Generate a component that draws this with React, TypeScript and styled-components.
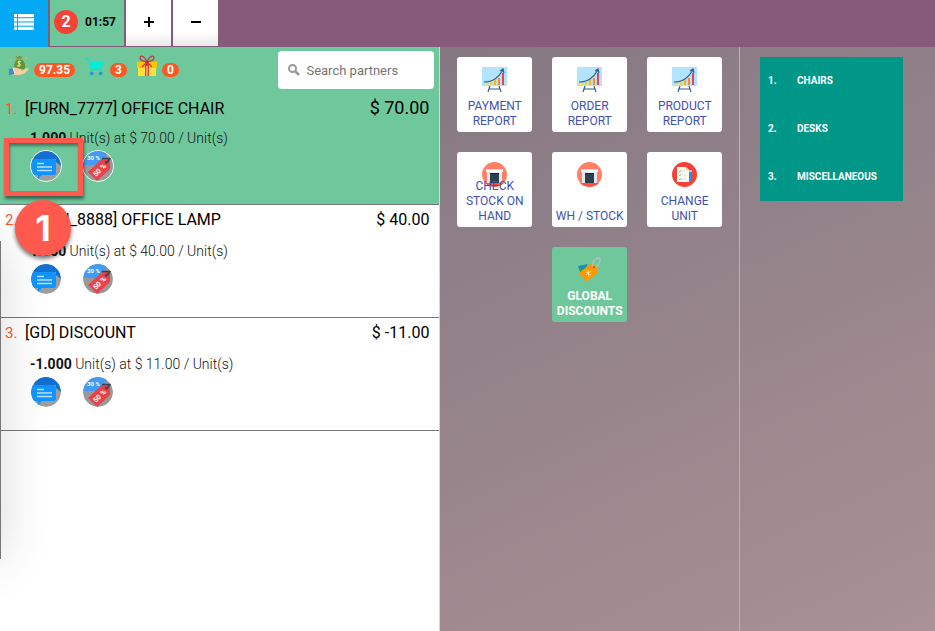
import React from "react";
import styled, { createGlobalStyle, css } from "styled-components";

const GlobalStyle = createGlobalStyle`
  * { box-sizing: border-box; }
  body { margin: 0; font-family: Roboto, "Liberation Sans", sans-serif; color: #111; overflow: hidden; }
  button, input { font: inherit; }
`;

const Screen = styled.div`
  display: flex;
  flex-direction: column;
  height: 100vh;
`;
const TopBar = styled.header`
  display: flex;
  gap: 2px;
  height: 47px;
  flex: none;
  background: #875a7b;
`;
const BarButton = styled.button<{ $kind: "menu" | "order" | "plain" }>`
  display: flex;
  align-items: center;
  justify-content: center;
  border: 0;
  padding: 0 0 2px;
  height: 46px;
  width: 45px;
  color: #000;
  background: linear-gradient(#fff 70%, #e8e8e8);
  ${(p) => p.$kind === "menu" && css`width: 48px; height: 47px; background: #03a9f4; color: #fff;`}
  ${(p) => p.$kind === "order" && css`
    width: 74px; gap: 7px; background: #6ec89b; font-size: 12px; font-weight: 700;
    padding: 0 4px 3px 0;
  `}
`;
const OrderNumber = styled.span`
  display: grid;
  place-items: center;
  width: 24px;
  height: 24px;
  border-radius: 50%;
  background: #f44336;
  color: #fff;
  font-size: 16px;
`;
const Panes = styled.div`
  display: flex;
  flex: 1;
  min-height: 0;
`;
const OrderPane = styled.section`
  position: relative;
  flex: 0 0 47%;
  background: #fff;
  border-right: 1px solid #d5d5d5;
  box-sizing: content-box;
`;
const EdgeShadow = styled.div`
  position: absolute;
  left: -40px;
  top: 194px;
  width: 41px;
  height: 318px;
  border-right: 1px solid #777;
  box-shadow: 0 0 50px rgba(0, 0, 0, 0.16);
`;
const CustomerBar = styled.div`
  position: relative;
  display: flex;
  justify-content: space-between;
  height: 45px;
  padding: 4px 5px 0 8px;
  background: #6ec89b;
`;
const Stats = styled.div`
  display: flex;
  align-items: flex-start;
  padding-top: 4px;
`;
const Stat = styled.div`
  display: flex;
  gap: 4px;
  margin-right: 9px;
`;
const StatValue = styled.span`
  margin-top: 8px;
  height: 14px;
  line-height: 14px;
  padding: 0 5px;
  border-radius: 7px;
  background: #ff5722;
  color: #fff;
  font-size: 12px;
  font-weight: 700;
`;
const Search = styled.label`
  display: flex;
  align-items: center;
  gap: 6px;
  width: 156px;
  height: 38px;
  padding: 0 10px;
  border-radius: 4px;
  background: #fff;
`;
const SearchInput = styled.input`
  width: 110px;
  min-width: 0;
  border: 0;
  padding: 1px 0 0;
  outline: 0;
  background: none;
  font-size: 13px;
  &::placeholder { color: #757575; opacity: 1; }
`;
const Lines = styled.ol`
  list-style: none;
  margin: 0;
  padding: 0;
`;
const Line = styled.li<{ $selected: boolean }>`
  position: relative;
  height: 113px;
  padding: 5px 10px 0 5px;
  border-bottom: 1px solid #777;
  ${(p) => p.$selected && css`background: #6ec89b; z-index: 1;`}
`;
const LineHead = styled.div`
  display: flex;
  align-items: baseline;
  height: 21px;
  font-size: 16px;
  color: #000;
`;
const LineNumber = styled.span`
  width: 20px;
  color: #ff5722;
  font-size: 15px;
`;
const Price = styled.span<{ $large: boolean }>`
  margin-left: auto;
  font-size: ${(p) => (p.$large ? 18 : 16)}px;
`;
const Quantity = styled.div`
  margin: 11px 0 0 25px;
  height: 18px;
  line-height: 18px;
  font-size: 14px;
  font-weight: 300;
  b { font-weight: 700; }
`;
const LineTools = styled.div`
  display: flex;
  gap: 20px;
  margin: 3px 0 0 25px;
`;
const RoundButton = styled.button<{ $selected: boolean }>`
  width: 32px;
  height: 32px;
  padding: 0;
  border: 1px solid ${(p) => (p.$selected ? "#fff" : "transparent")};
  border-radius: 50%;
  background: none;
  overflow: hidden;
  svg { display: block; border-radius: 50%; }
`;
const Highlight = styled.div`
  position: absolute;
  left: 4px;
  top: 46px;
  width: 79px;
  height: 58px;
  border: 5px solid #ff5a4d;
  box-shadow: 1px 3px 3px rgba(0, 0, 0, 0.5), inset 1px 3px 3px rgba(0, 0, 0, 0.4);
  pointer-events: none;
`;
const StepMarker = styled.div`
  position: absolute;
  left: 15px;
  top: 108px;
  width: 56px;
  height: 56px;
  display: grid;
  place-items: center;
  border-radius: 50%;
  background: #ff5a4d;
  color: #fff;
  font: 700 36px Inter, sans-serif;
  box-shadow: 0 3px 4px rgba(0, 0, 0, 0.55);
`;
const Workspace = styled.div`
  display: flex;
  flex: 1;
  min-width: 0;
  background: linear-gradient(155deg, #857882, #a99195);
`;
const ActionPane = styled.section`
  flex: 1;
  padding-top: 10px;
`;
const ActionGrid = styled.div`
  display: grid;
  grid-template-columns: repeat(3, 75px);
  gap: 20px;
  justify-content: center;
`;
const ActionTile = styled.button<{ $featured: boolean }>`
  position: relative;
  display: flex;
  align-items: flex-end;
  justify-content: center;
  height: 75px;
  padding: 0 2px 3px;
  border: 0;
  border-radius: 3px;
  background: #fff;
  color: #3f51b5;
  font-size: 12px;
  line-height: 15px;
  text-align: center;
  ${(p) => p.$featured && css`grid-column: 2; background: #6ec89b; color: #fff; font-weight: 700;`}
  svg { position: absolute; top: 10px; left: 25px; }
  span { position: relative; }
`;
const CategoryPane = styled.nav`
  flex: 0 0 196px;
  padding: 10px 32px 0 20px;
  border-left: 1px solid #f0b323;
`;
const CategoryList = styled.ol`
  list-style: none;
  margin: 0;
  padding: 0;
  background: #009688;
`;
const CategoryLink = styled.a`
  display: grid;
  grid-template-columns: 29px 1fr;
  align-items: center;
  height: 48px;
  padding: 0 0 2px 8px;
  color: #fff;
  font-size: 10px;
  font-weight: 700;
  text-decoration: none;
`;

const MenuIcon = () => (
  <svg width="20" height="17" viewBox="0 0 20 16" preserveAspectRatio="none" fill="#fff">
    {[0, 4, 8, 12].map((y) => (
      <g key={y}>
        <rect y={y} width="3" height="3" />
        <rect x="4" y={y} width="16" height="3" />
      </g>
    ))}
  </svg>
);
const SignIcon = ({ plus }: { plus: boolean }) => (
  <svg width="10" height="10" viewBox="0 0 10 10" fill="none" stroke="#000" strokeWidth="2">
    <path d={plus ? "M0 5h10M5 0v10" : "M0 5h10"} />
  </svg>
);
const MoneyIcon = () => (
  <svg width="22" height="22" viewBox="0 0 22 22">
    <path d="M9 4 8 1l2 1 2-1 2 1-1 2c3 2 5 5 4 9-1 2-10 2-11-1 0-3 1-6 3-8Z" fill="#63943a" />
    <path d="M8 4h6" stroke="#d5a93d" />
    <path d="M13 7c-3-2-4 1-2 1.500 3 1 1 4-2 2M11 5.500v6" stroke="#f5e886" fill="none" />
    <path d="M4 14c3-3 5-1 8 0 2 0 2 2 0 2 3 0 5-2 7-3 2 0 2 2 0 3-3 4-7 4-14 4Z" fill="#ffcc9b" />
    <path d="m1 14 4-1 2 6-6 1Z" fill="#4788c7" />
    <path d="m5 13 2 6" stroke="#dceeff" />
    <path d="M3 4v2M2 5h2M18 2v2M17 3h2" stroke="#efb643" />
  </svg>
);
const CartIcon = () => (
  <svg width="22" height="22" viewBox="-1 -1 24 24">
    <path d="M1 3h3l3 12h11" fill="none" stroke="#12d7d7" strokeWidth="1" />
    <path d="M4 6h16l-2 8H6Z" fill="#00eddc" />
    <circle cx="7.500" cy="19" r="2" fill="#149eea" /><circle cx="17" cy="19" r="2" fill="#149eea" />
  </svg>
);
const GiftIcon = () => (
  <svg width="22" height="22" viewBox="0 0 22 22">
    <path d="M2 10h18v11H2Z" fill="#ffe13b" /><path d="M1 7h20v6H1Z" fill="#ffc800" />
    <path d="M9 7h4v14H9Z" fill="#e53935" />
    <path d="M11 7C8 0 4 0 4 3s4 3 7 4c3-7 7-7 7-4s-4 3-7 4Zm0 0-5 5m5-5 5 5" fill="none" stroke="#c92f36" strokeWidth="1.200" />
    <path d="M11 11v10" stroke="#fff29b" />
  </svg>
);
const SearchIcon = () => (
  <svg width="12" height="12" viewBox="0 0 12 12" fill="none" stroke="#999" strokeWidth="2">
    <circle cx="4.500" cy="4.500" r="3.500" /><path d="m7 7 4 4" strokeWidth="2.500" />
  </svg>
);
const NoteIcon = () => (
  <svg width="30" height="30" viewBox="0 0 30 30">
    <path d="M0 0h30v30H0Z" fill="#9e9e9e" />
    <path d="M3 0h27v15l-5-4V8H3Z" fill="#1170d2" />
    <path d="M2 8h21q2 0 2 2v12q0 2-2 2H11l-4 4v-4H0V10q0-2 2-2Z" fill="#1194ff" />
    <path d="M6 12.500h7M6 16h15M6 19.500h15" stroke="#b9e0ff" strokeWidth="1.500" />
  </svg>
);
const TagIcon = () => (
  <svg width="30" height="30" viewBox="0 0 30 30" fontFamily="Roboto, sans-serif" fontWeight="700" fill="#fff">
    <path d="M0 0h30v30H0Z" fill="#999" />
    <path d="M0 0h23v9l-8 5H0Z" fill="#439bf4" />
    <path d="m5 21 14-13q1-1 2-1l5 1q1 0 1 2v8L14 30Z" fill="#e94349" />
    <circle cx="23" cy="11" r="1.500" fill="#b12d37" />
    <path d="M19 7.500h8l-4 5" fill="none" stroke="#354450" strokeWidth="1.700" />
    <text x="4" y="9" fontSize="6">30 %</text>
    <text x="13" y="26" fontSize="7" transform="rotate(-45 13 26)">50 %</text>
  </svg>
);
const ChartIcon = () => (
  <svg width="25" height="25" viewBox="0 0 25 25">
    <path d="M0 0h25v19H0Z" fill="#b2e4ff" />
    <path d="M3 16h3v2H3Z" fill="#ffe034" /><path d="M8 15h2v3H8Z" fill="#ffd21c" />
    <path d="M12 13h2v5h-2Z" fill="#ffb11b" /><path d="M16 11h2v7h-2Z" fill="#ff8e16" />
    <path d="M20 6h2v12h-2Z" fill="#e6405b" />
    <path d="M2 15c9 0 14-4 19-12m-3 1 3-2 1 4M8 19l-2 6m11-6 2 6M7 22h11" fill="none" stroke="#355b89" strokeWidth="1.200" />
  </svg>
);
const WarehouseIcon = () => (
  <svg width="25" height="25" viewBox="0 0 25 25">
    <circle cx="12.500" cy="12.500" r="12.500" fill="#ff8066" />
    <path d="M3 21h19c-5 5-14 5-19 0Z" fill="#f8523f" />
    <path d="M5 9h15v12H5Z" fill="#e3e8ed" />
    <path d="M4 7h17v3H4Z" fill="#f6fbfb" />
    <path d="M5 7.500h15" stroke="#b5e8e0" />
    <path d="M8 11h9v10H8Z" fill="#2a3f52" /><path d="M8 11h9v1H8Z" fill="#152838" />
  </svg>
);
const ChecklistIcon = () => (
  <svg width="25" height="25" viewBox="0 0 25 25">
    <circle cx="12.500" cy="12.500" r="12.500" fill="#f44336" />
    <path d="M5 5h9l3 3v12H5Z" fill="#fbf8f0" /><path d="M14 5v3h3" fill="#d1ccc2" />
    <path d="m7 9 1 1 1-2m-2 5 1 1 1-2m-2 5 1 1 1-2" fill="none" stroke="#48ac95" strokeWidth=".6" />
    <path d="M10 9h3m-3 4h5m-5 4h5" stroke="#dad7d0" strokeWidth=".6" />
    <path d="M17 10h3v8l-1 2-2-2Z" fill="#2292e6" /><path d="M17 8h3v2h-3Z" fill="#ffb1a6" />
  </svg>
);
const DiscountIcon = () => (
  <svg width="25" height="25" viewBox="0 0 25 25">
    <path d="m1 9 10-2-7 10Z" fill="#1689d9" /><path d="m2 12 12-4-9 11Z" fill="#20a85a" />
    <path d="m2 16 10-8q1-1 2-1l5 1q1 0 1 1l1 7-12 9Z" fill="#ff9800" />
    <path d="M17 10c-3-3 1-9 4-9 4 0 2 6-2 9" fill="none" stroke="#b8c2ba" strokeWidth="1.300" />
    <circle cx="17" cy="10" r="1" fill="#a65c00" />
    <path d="m9 15 5 3m-3-5 1 7m2-6-5 4" stroke="#ffe1a6" strokeWidth=".9" />
  </svg>
);

const lines = [
  { name: "[FURN_7777] OFFICE CHAIR", total: "$ 70.00", qty: "1.000", unit: "$ 70.00" },
  { name: "[FURN_8888] OFFICE LAMP", total: "$ 40.00", qty: "1.000", unit: "$ 40.00" },
  { name: "[GD] DISCOUNT", total: "$ -11.00", qty: "-1.000", unit: "$ 11.00" },
];
const actions = [
  { label: "PAYMENT REPORT", Icon: ChartIcon },
  { label: "ORDER REPORT", Icon: ChartIcon },
  { label: "PRODUCT REPORT", Icon: ChartIcon },
  { label: "CHECK STOCK ON HAND", Icon: WarehouseIcon },
  { label: "WH / STOCK", Icon: WarehouseIcon },
  { label: "CHANGE UNIT", Icon: ChecklistIcon },
  { label: "GLOBAL DISCOUNTS", Icon: DiscountIcon, featured: true },
];

export default function App() {
  return (
    <Screen>
      <GlobalStyle />
      <TopBar>
        <BarButton $kind="menu" aria-label="Menu"><MenuIcon /></BarButton>
        <BarButton $kind="order"><OrderNumber>2</OrderNumber>01:57</BarButton>
        <BarButton $kind="plain" aria-label="New order"><SignIcon plus /></BarButton>
        <BarButton $kind="plain" aria-label="Remove order"><SignIcon plus={false} /></BarButton>
      </TopBar>
      <Panes>
        <OrderPane>
          <CustomerBar>
            <Stats>
              <Stat><MoneyIcon /><StatValue>97.35</StatValue></Stat>
              <Stat><CartIcon /><StatValue>3</StatValue></Stat>
              <Stat><GiftIcon /><StatValue>0</StatValue></Stat>
            </Stats>
            <Search><SearchIcon /><SearchInput placeholder="Search partners" aria-label="Search partners" /></Search>
          </CustomerBar>
          <Lines>
            {lines.map((line, i) => (
              <Line key={line.name} $selected={i === 0}>
                <LineHead>
                  <LineNumber>{i + 1}.</LineNumber>
                  <span>{line.name}</span>
                  <Price $large={i === 0}>{line.total}</Price>
                </LineHead>
                <Quantity><b>{line.qty}</b> Unit(s) at {line.unit} / Unit(s)</Quantity>
                <LineTools>
                  <RoundButton $selected={i === 0} aria-label="Note"><NoteIcon /></RoundButton>
                  <RoundButton $selected={i === 0} aria-label="Discount"><TagIcon /></RoundButton>
                </LineTools>
                {i === 0 && <><Highlight /><StepMarker>1</StepMarker></>}
              </Line>
            ))}
          </Lines>
          <EdgeShadow />
        </OrderPane>
        <Workspace>
          <ActionPane>
            <ActionGrid>
              {actions.map(({ label, Icon, featured }) => (
                <ActionTile key={label} $featured={!!featured}><Icon /><span>{label}</span></ActionTile>
              ))}
            </ActionGrid>
          </ActionPane>
          <CategoryPane>
            <CategoryList>
              {["CHAIRS", "DESKS", "MISCELLANEOUS"].map((name, i) => (
                <li key={name}><CategoryLink href="#"><span>{i + 1}.</span><span>{name}</span></CategoryLink></li>
              ))}
            </CategoryList>
          </CategoryPane>
        </Workspace>
      </Panes>
    </Screen>
  );
}
